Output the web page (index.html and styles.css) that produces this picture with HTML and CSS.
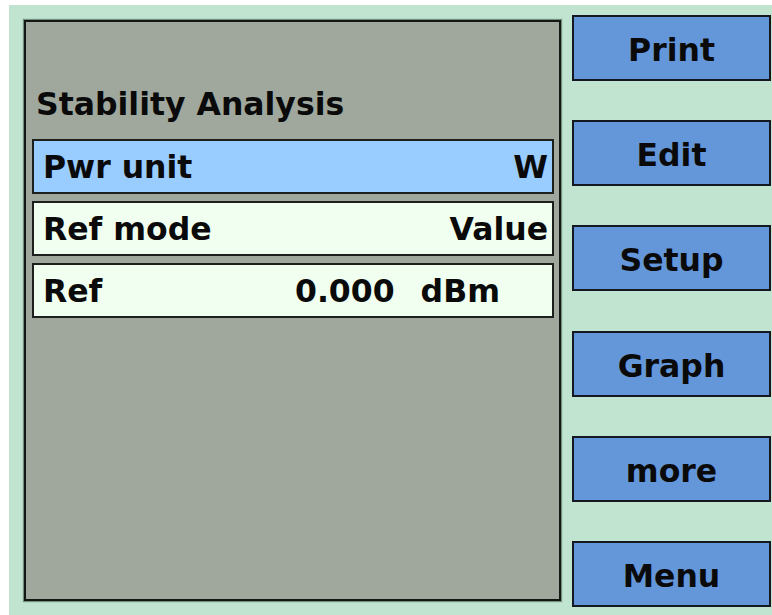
FILE: index.html
```html
<!DOCTYPE html>
<html lang="en">
<head>
    <meta charset="UTF-8">
    <meta name="viewport" content="width=device-width, initial-scale=1.0">
    <title>Stability Analysis</title>
    <link rel="stylesheet" href="styles.css">
</head>
<body>
    <div class="screen">
        <div class="panel">
            <div class="title">Stability Analysis</div>
            <div class="row selected">
                <span class="label">Pwr unit</span>
                <span class="value">W</span>
            </div>
            <div class="row">
                <span class="label">Ref mode</span>
                <span class="value">Value</span>
            </div>
            <div class="row">
                <span class="label">Ref</span>
                <span class="value num">0.000</span>
                <span class="unit">dBm</span>
            </div>
        </div>

        <div class="softkeys">
            <div class="key">Print</div>
            <div class="key">Edit</div>
            <div class="key">Setup</div>
            <div class="key">Graph</div>
            <div class="key">more</div>
            <div class="key">Menu</div>
        </div>
    </div>
</body>
</html>
```

FILE: styles.css
```css
html, body {
    margin: 0;
    height: 100%;
    background: #ffffff;
}
body {
    padding: 5px 0 0 9px;
    box-sizing: border-box;
    font-family: "DejaVu Sans", Verdana, sans-serif;
    font-weight: bold;
    font-size: 31.5px;
    line-height: 36px;
    color: #0a0a0a;
}
.screen {
    height: 610px;
    box-sizing: border-box;
    background: #c1e4d1;
    padding: 10px 1px 8px 15px;
    display: grid;
    grid-template-columns: 537px 199px;
    column-gap: 11px;
}
.panel {
    margin: 5px 0 6px 0;
    border: 2px solid #141814;
    box-shadow: 0 0 1px 1px rgba(40, 60, 40, 0.5);
    background: #a0a89e;
    padding: 64px 5px 0 6px;
    display: flex;
    flex-direction: column;
}
.title {
    margin-bottom: 17px;
    padding-left: 4px;
}
.row {
    height: 50px;
    border: 2px solid #1c1f1c;
    background: #f0fff0;
    display: flex;
    align-items: center;
    padding: 1px 4px 0 9px;
    margin-bottom: 7px;
}
.row.selected {
    background: #99ccff;
}
.label {
    flex: 1;
}
.unit {
    margin-left: 26px;
    margin-right: 48px;
}
.softkeys {
    display: flex;
    flex-direction: column;
    justify-content: space-between;
}
.key {
    height: 66px;
    box-sizing: border-box;
    border: 2px solid #141820;
    background: #6497da;
    display: flex;
    align-items: center;
    justify-content: center;
    padding-top: 4px;
}
```
